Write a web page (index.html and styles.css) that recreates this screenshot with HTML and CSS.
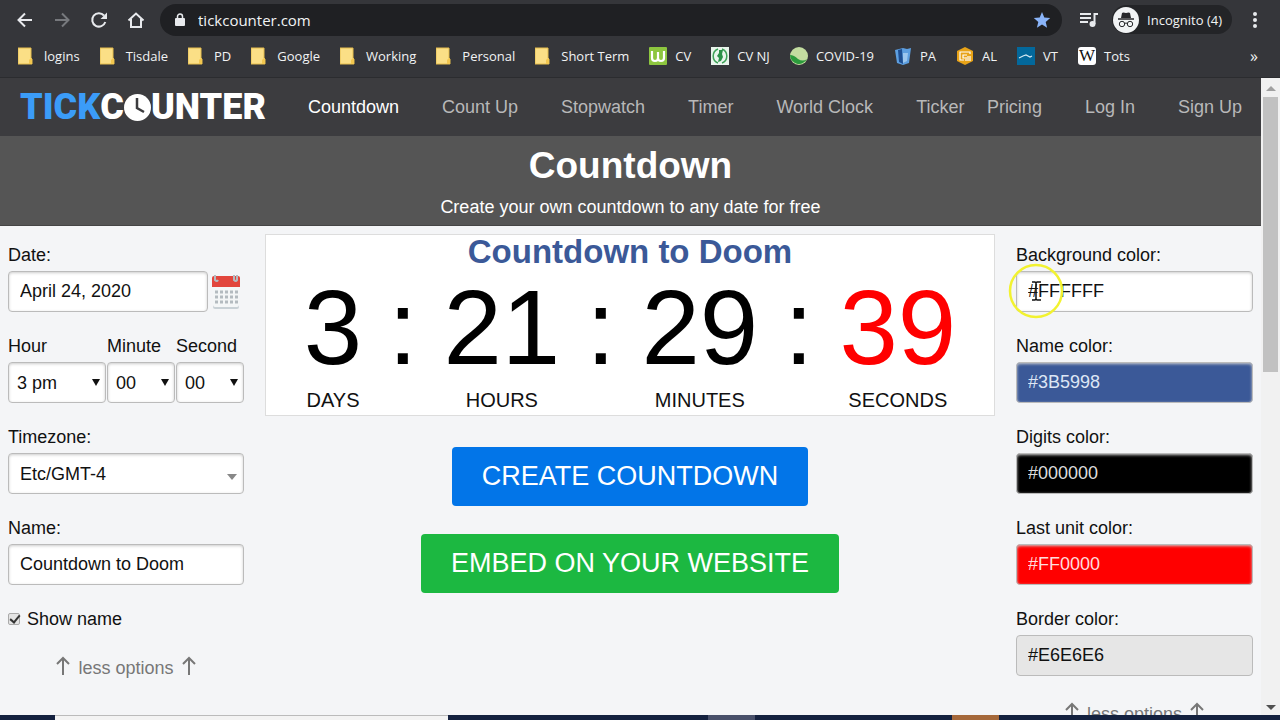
FILE: index.html
```
<!DOCTYPE html>
<html lang="en">
<head>
  <meta charset="UTF-8">
  <meta name="viewport" content="width=device-width, initial-scale=1">
  <title>Countdown - TickCounter</title>
  <link rel="stylesheet" href="styles.css">
</head>
<body>

<svg class="defs" aria-hidden="true">
  <symbol id="folder" viewBox="0 0 18 18">
    <path d="M0 1h13v10l1 1v5H0z" fill="#fbdf86"/>
    <path d="M0 1h13v10l1 1v5H0z" fill="none" stroke="#e6bd4c" stroke-width="1"/>
    <path d="M11 17v-4l2-2 1 1v5z" fill="#f3c74f"/>
  </symbol>
  <symbol id="arrow-up" viewBox="0 0 14 20">
    <path d="M7 19V2M1 8l6-6 6 6" fill="none" stroke="#777" stroke-width="2"/>
  </symbol>
</svg>

<header class="browser">
  <div class="toolbar">
    <button class="tool" aria-label="Back">
      <svg width="18" height="18" viewBox="0 0 18 18"><path d="M16 9H3M9 2.500L2.500 9 9 15.500" fill="none" stroke="#e8eaed" stroke-width="2"/></svg>
    </button>
    <button class="tool" aria-label="Forward">
      <svg width="18" height="18" viewBox="0 0 18 18"><path d="M2 9h13M9 2.500L15.500 9 9 15.500" fill="none" stroke="#77797d" stroke-width="2"/></svg>
    </button>
    <button class="tool" aria-label="Reload">
      <svg width="18" height="18" viewBox="0 0 18 18"><path d="M15.300 11A6.700 6.700 0 1 1 14 4.500" fill="none" stroke="#e8eaed" stroke-width="2"/><path d="M17 1.500V8h-6.500z" fill="#e8eaed"/></svg>
    </button>
    <button class="tool" aria-label="Home">
      <svg width="18" height="18" viewBox="0 0 18 18"><path d="M1.500 9.500L9 2.500l7.500 7M4 8v8h10V8" fill="none" stroke="#e8eaed" stroke-width="2"/></svg>
    </button>
    <div class="address">
      <svg width="12" height="14" viewBox="0 0 12 14"><rect x="1" y="5" width="10" height="8" rx="1" fill="#e8eaed"/><path d="M3.500 6V3.500a2.500 2.500 0 0 1 5 0V6" fill="none" stroke="#e8eaed" stroke-width="1.500"/></svg>
      <input type="text" class="url" value="tickcounter.com" aria-label="Address">
      <button class="star" aria-label="Edit bookmark">
        <svg width="18" height="18" viewBox="0 0 18 18"><path d="M9 1l2.300 5.500 5.900.5-4.500 3.900 1.400 5.800L9 13.600l-5.100 3.100 1.400-5.800L.8 7l5.900-.5z" fill="#8ab4f8"/></svg>
      </button>
    </div>
    <button class="tool" aria-label="Media control">
      <svg width="20" height="16" viewBox="0 0 20 16"><path d="M1 2h11M1 6h11M1 10h8M15.500 12V2H19" fill="none" stroke="#e8eaed" stroke-width="2"/><circle cx="13.500" cy="12" r="3" fill="#e8eaed"/></svg>
    </button>
    <button class="profile">
      <svg width="26" height="26" viewBox="0 0 26 26"><circle cx="13" cy="13" r="13" fill="#f1f3f4"/><path d="M9 6q1-1 4 0 3-1 4 0l1 5H8z" fill="#27282b"/><path d="M5 12h16" stroke="#27282b" stroke-width="1.500"/><g fill="none" stroke="#27282b"><circle cx="9" cy="17" r="2.700"/><circle cx="17" cy="17" r="2.700"/><path d="M11.500 16.500q1.500-1 3 0"/></g></svg>
      Incognito (4)
    </button>
    <button class="tool" aria-label="Menu">
      <svg width="18" height="18" viewBox="0 0 18 18" fill="#e8eaed"><circle cx="9" cy="3" r="2"/><circle cx="9" cy="9" r="2"/><circle cx="9" cy="15" r="2"/></svg>
    </button>
  </div>

  <nav class="bookmarks" aria-label="Bookmarks">
    <a href="#"><svg class="icon"><use href="#folder"/></svg>logins</a>
    <a href="#"><svg class="icon"><use href="#folder"/></svg>Tisdale</a>
    <a href="#"><svg class="icon"><use href="#folder"/></svg>PD</a>
    <a href="#"><svg class="icon"><use href="#folder"/></svg>Google</a>
    <a href="#"><svg class="icon"><use href="#folder"/></svg>Working</a>
    <a href="#"><svg class="icon"><use href="#folder"/></svg>Personal</a>
    <a href="#"><svg class="icon"><use href="#folder"/></svg>Short Term</a>
    <a href="#"><svg class="icon" viewBox="0 0 18 18"><rect width="18" height="18" rx="1" fill="#8dc63f"/><path d="M3 4v7q0 3 3 3t3-3V5v6q0 3 3 3t3-3V4" fill="none" stroke="#fff" stroke-width="2.200"/></svg>CV</a>
    <a href="#"><svg class="icon" viewBox="0 0 18 18"><rect width="18" height="18" fill="#e9f5ec"/><path d="M7 2a7.500 7.500 0 0 0 0 14M11 2a7.500 7.500 0 0 1 0 14" fill="none" stroke="#3da257" stroke-width="1.500"/><path d="M8 3h4l-1 4 1 3-2 4-3 1 1-4-2-2 2-3z" fill="#2b9148"/></svg>CV NJ</a>
    <a href="#"><svg class="icon" viewBox="0 0 18 18"><circle cx="9" cy="9" r="9" fill="#c3dda0"/><path d="M0 8q4 0 8 4 5 3 9 0a9 9 0 0 1-17-4z" fill="#2b9b3c"/></svg>COVID-19</a>
    <a href="#"><svg class="icon" viewBox="0 0 18 18"><path d="M1 3l4-1 4-1 4 1 4-1-2 15-6 2-6-2z" fill="#5d9fe0"/><path d="M4 3l4-1 1 15-4-2z" fill="#1d4e91"/><path d="M9 6h5l-1 8-4 2z" fill="#9cc7ee"/></svg>PA</a>
    <a href="#"><svg class="icon" viewBox="0 0 18 18"><path d="M9 0l8 4v10l-8 4-8-4V4z" fill="#e8a317"/><path d="M14 7V5H4v8h4M11 8H7v3h2M10 14v-4M12 14V9M14 14V9" fill="none" stroke="#fff" stroke-width="1.200"/></svg>AL</a>
    <a href="#"><svg class="icon" viewBox="0 0 18 18"><rect width="18" height="18" fill="#03689b"/><path d="M2 11l4-2 3-1 4 2 2-1" fill="none" stroke="#d6e9f2" stroke-width="1.200"/></svg>VT</a>
    <a href="#"><span class="icon wiki">W</span>Tots</a>
    <button class="more" aria-label="More bookmarks">»</button>
  </nav>
</header>

<div class="viewport">
  <div class="page">
    <header class="site-header">
      <a href="#" class="logo"><span class="tick">TICK</span>C<svg class="clock" viewBox="0 0 27 27" role="img" aria-label="O"><circle cx="13.500" cy="13.500" r="13.500" fill="#fff"/><path d="M13 4v10l7 4" fill="none" stroke="#3c3c3f" stroke-width="2.500"/></svg>UNTER</a>
      <nav class="menu">
        <a href="#" class="active">Countdown</a>
        <a href="#">Count Up</a>
        <a href="#">Stopwatch</a>
        <a href="#">Timer</a>
        <a href="#">World Clock</a>
        <a href="#">Ticker</a>
      </nav>
      <nav class="menu account">
        <a href="#">Pricing</a>
        <a href="#">Log In</a>
        <a href="#">Sign Up</a>
      </nav>
    </header>

    <div class="hero">
      <h1>Countdown</h1>
      <p>Create your own countdown to any date for free</p>
    </div>

    <main class="columns">
      <form class="options">
        <div class="field">
          <label for="date">Date:</label>
          <div class="date-row">
            <input type="text" id="date" value="April 24, 2020">
            <button type="button" class="calendar" aria-label="Open calendar">
              <svg width="28" height="36" viewBox="0 0 28 36"><rect x="1" y="4" width="26" height="31" rx="2" fill="#c9d1d6"/><rect x="1" y="4" width="26" height="29" rx="2" fill="#f4f6f7"/><path d="M0 13V4q0-2 2-2h24q2 0 2 2v9z" fill="#e2463d"/><g fill="none" stroke="#b4bbc0" stroke-width="2"><path d="M3 1v5q2 2 3 0M22 1v5q2 2 3 0V1"/><path d="M3 18h23M3 23h23M3 28h23" stroke-width="3" stroke-dasharray="3 2"/></g></svg>
            </button>
          </div>
        </div>

        <div class="time-row">
          <div class="field">
            <label for="hour">Hour</label>
            <div class="select"><select id="hour"><option>3 pm</option></select></div>
          </div>
          <div class="field">
            <label for="minute">Minute</label>
            <div class="select"><select id="minute"><option>00</option></select></div>
          </div>
          <div class="field">
            <label for="second">Second</label>
            <div class="select"><select id="second"><option>00</option></select></div>
          </div>
        </div>

        <div class="field">
          <label for="timezone">Timezone:</label>
          <div class="select wide"><select id="timezone"><option>Etc/GMT-4</option></select></div>
        </div>

        <div class="field">
          <label for="name">Name:</label>
          <input type="text" id="name" value="Countdown to Doom">
        </div>

        <div class="check">
          <input type="checkbox" id="show-name" checked>
          <label for="show-name">Show name</label>
        </div>

        <a href="#" class="less"><svg><use href="#arrow-up"/></svg>less options<svg><use href="#arrow-up"/></svg></a>
      </form>

      <section class="center">
        <div class="counter">
          <h2>Countdown to Doom</h2>
          <div class="units">
            <div class="unit"><span class="digits">3</span>DAYS</div>
            <span class="digits">:</span>
            <div class="unit"><span class="digits">21</span>HOURS</div>
            <span class="digits">:</span>
            <div class="unit"><span class="digits">29</span>MINUTES</div>
            <span class="digits">:</span>
            <div class="unit"><span class="digits last">39</span>SECONDS</div>
          </div>
        </div>
        <button class="btn create">CREATE COUNTDOWN</button>
        <button class="btn embed">EMBED ON YOUR WEBSITE</button>
      </section>

      <form class="options colors">
        <div class="field pointed">
          <label for="bg-color">Background color:</label>
          <input type="text" id="bg-color" value="#FFFFFF">
          <svg class="pointer" viewBox="0 0 56 56"><circle cx="28" cy="28" r="26" fill="none" stroke="#f2f230" stroke-width="2.500"/><path d="M24 19h3l1 1 1-1h4M28 20v17M24 37h3l1-1 1 1h4" fill="none" stroke="#111" stroke-width="1.500"/></svg>
        </div>
        <div class="field">
          <label for="name-color">Name color:</label>
          <input type="text" id="name-color" class="blue" value="#3B5998">
        </div>
        <div class="field">
          <label for="digits-color">Digits color:</label>
          <input type="text" id="digits-color" class="black" value="#000000">
        </div>
        <div class="field">
          <label for="last-color">Last unit color:</label>
          <input type="text" id="last-color" class="red" value="#FF0000">
        </div>
        <div class="field">
          <label for="border-color">Border color:</label>
          <input type="text" id="border-color" class="grey" value="#E6E6E6">
        </div>
        <a href="#" class="less"><svg><use href="#arrow-up"/></svg>less options<svg><use href="#arrow-up"/></svg></a>
      </form>
    </main>
  </div>

  <div class="scrollbar">
    <span class="up"></span>
    <span class="thumb"></span>
    <span class="down"></span>
  </div>
</div>

<footer class="taskbar">
  <span class="search"></span>
  <span class="task"></span>
  <span class="task orange"></span>
</footer>

</body>
</html>
```
FILE: styles.css
```
* { box-sizing: border-box; }
body { margin: 0; height: 100vh; display: flex; flex-direction: column; overflow: hidden; font-family: "Liberation Sans", Arial, sans-serif; font-size: 18px; color: #111; background: #f4f5f7; }
a { color: inherit; text-decoration: none; }
button { font-family: inherit; border: none; background: none; padding: 0; cursor: pointer; }
svg { display: block; flex: none; }
.defs { display: none; }

/* browser */
.browser { flex: none; background: #35363a; color: #f1f3f4; font-family: "Open Sans", "Noto Sans", sans-serif; border-bottom: 1px solid #2b2c2f; }
.toolbar { display: flex; align-items: center; height: 39px; padding: 0 16px; gap: 19px; }
.address { flex: 1; display: flex; align-items: center; height: 32px; margin: 0 -2px 0 -4px; padding: 0 11px 0 14px; border-radius: 16px; background: #1f2023; }
.url { flex: 1; min-width: 0; margin-left: 12px; padding: 0; border: none; outline: none; background: none; color: #f1f3f4; font-family: inherit; font-size: 15px; }
.profile { display: flex; align-items: center; gap: 8px; height: 29px; margin: 0 -5px 0 -6px; padding: 0 10px 0 1px; border-radius: 15px; background: #232427; color: #f1f3f4; font-size: 13px; }
.bookmarks { display: flex; align-items: center; height: 38px; padding: 0 22px 4px 18px; gap: 20px; font-size: 13px; }
.bookmarks a { display: flex; align-items: center; gap: 8px; white-space: nowrap; }
.icon { width: 18px; height: 18px; }
.wiki { border-radius: 3px; background: #fff; color: #111; font-family: "Liberation Serif", serif; font-size: 17px; line-height: 18px; text-align: center; }
.more { margin-left: auto; color: #f1f3f4; font-size: 16px; }

/* window content */
.viewport { flex: 1; min-height: 0; display: flex; }
.page { flex: 1; min-width: 0; overflow: hidden; }
.scrollbar { width: 19px; display: flex; flex-direction: column; align-items: center; padding: 8px 0 5px; background: #f1f1f1; }
.up, .down { border: 5px solid transparent; }
.up { border-top: none; border-bottom-color: #a0a0a0; }
.down { margin-top: auto; border-bottom: none; border-top-color: #505050; }
.thumb { width: 15px; height: 44%; margin-top: 6px; background: #c1c1c1; }

.site-header { display: flex; align-items: center; height: 58px; padding: 0 19px 0 20px; background: #3c3c3f; }
.logo { display: flex; align-items: center; color: #fff; font-family: Roboto, sans-serif; font-size: 36px; font-weight: 900; line-height: 58px; }
.tick { color: #3b9cf8; }
.clock { width: 27px; height: 27px; }
.menu { display: flex; gap: 43px; margin-left: 42px; color: #b8b8b9; white-space: nowrap; }
.menu .active { color: #fff; }
.account { margin-left: auto; }

.hero { padding: 8px 0 7px; background: #555; border-bottom: 1px solid #454545; color: #fff; text-align: center; }
.hero h1 { margin: 0; font-size: 37px; line-height: 44px; }
.hero p { margin: 8px 0 0; line-height: 22px; }

.columns { display: grid; grid-template-columns: 236px 1fr 237px; gap: 21px; padding: 8px; }
.options { padding-top: 9px; }
.field { margin-bottom: 22px; }
.field label { display: block; line-height: 25px; margin-bottom: 3px; }
.field input, select { display: block; width: 100%; height: 41px; padding: 0 11px; border: 1px solid #bbb; border-radius: 4px; background: #fff; box-shadow: inset 0 1px 3px #ccc; color: #111; font-family: inherit; font-size: 18px; outline: none; }
.date-row { display: flex; align-items: center; gap: 4px; }
.date-row input { flex: 1; min-width: 0; }
.calendar { margin-right: 4px; }
.time-row { display: grid; grid-template-columns: 98px 1fr 1fr; gap: 1px; }
.select { position: relative; }
.select::after { content: ""; position: absolute; right: 6px; top: 17px; border: 4px solid transparent; border-top: 7px solid #111; border-bottom: none; }
select { appearance: none; padding: 0 8px; }
.wide select { padding: 0 11px; }
.wide::after { right: 7px; top: 21px; border-width: 5px; border-top: 6px solid #888; }
.check { display: flex; align-items: center; gap: 7px; line-height: 24px; }
.check input { appearance: none; width: 12px; height: 12px; margin: 0; border: 1px solid #aaa; border-radius: 2px; background: #e4e4e4; }
.check input:checked::after { content: ""; display: block; width: 4px; height: 8px; margin: -1px 0 0 3px; border: solid #333; border-width: 0 2px 2px 0; transform: rotate(40deg); }
.less { display: flex; justify-content: center; align-items: center; gap: 8px; margin-top: 25px; line-height: 24px; color: #777; }
.less svg { width: 14px; height: 20px; margin-bottom: 4px; }

.center { display: flex; flex-direction: column; align-items: center; }
.counter { width: 100%; height: 182px; border: 1px solid #ddd; background: #fff; text-align: center; }
.counter h2 { margin: 0; padding-top: 1px; font-size: 33px; line-height: 32px; color: #3b5998; }
.units { display: flex; justify-content: center; gap: 26px; font-size: 20px; line-height: 24px; }
.unit { display: flex; flex-direction: column; align-items: center; }
.digits { font-size: 105px; line-height: 120px; color: #000; }
.digits.last { color: #f00; }
.btn { height: 59px; padding: 0 30px; border-radius: 4px; color: #fff; font-size: 27px; }
.create { margin-top: 31px; background: #0275e8; }
.embed { margin-top: 28px; background: #1cb841; }

.colors .blue { background: #3b5998; color: #dde6f5; }
.colors .black { background: #000; color: #ddd; }
.colors .red { background: #f00; color: #fdd; }
.colors .grey { background: #e6e6e6; box-shadow: none; }
.colors .less { margin-top: 26px; }
.pointed { position: relative; }
.pointer { position: absolute; left: -8px; top: 20px; width: 56px; height: 56px; }

.taskbar { flex: none; display: flex; height: 5px; background: #14213f; }
.search { width: 393px; margin-left: 55px; border-top: 1px solid #bbb; background: #f3f3f3; }
.task { width: 47px; margin-left: 260px; background: #48506a; }
.task.orange { margin-left: 197px; background: #a5683a; }
```
